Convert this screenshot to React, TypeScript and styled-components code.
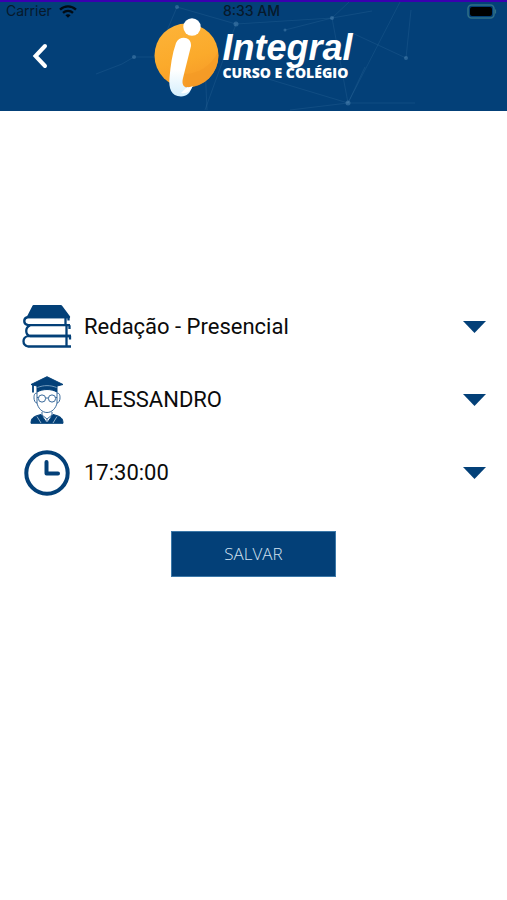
import React, { useState } from "react";
import styled, { createGlobalStyle } from "styled-components";

const navy = "#034078";

const GlobalStyle = createGlobalStyle`
  *, *::before, *::after { box-sizing: border-box; }
  body { margin: 0; background: #fff; font-family: Roboto, sans-serif; }
`;

const Screen = styled.div`
  min-height: 100vh;
  background: #fff;
`;

const Header = styled.header`
  position: relative;
  height: 111px;
  overflow: hidden;
  background: ${navy};
  border-top: 2px solid #3a00b0;
`;

const Network = styled.svg`
  position: absolute;
  top: 0;
  left: 50%;
  width: 508px;
  height: 109px;
  margin-left: -254px;
`;

const StatusBar = styled.div`
  position: relative;
  display: grid;
  grid-template-columns: 1fr auto 1fr;
  align-items: center;
  height: 18px;
  padding: 0 10px 0 6px;
  color: #07192b;
  font-family: Inter, sans-serif;
  font-size: 14px;
  line-height: 18px;
`;

const Carrier = styled.div`
  display: flex;
  align-items: center;
  gap: 7px;
`;

const Clock = styled.time`
  font-weight: 500;
`;

const Battery = styled.svg`
  justify-self: end;
`;

const TitleBar = styled.div`
  position: relative;
  display: grid;
  grid-template-columns: 1fr auto 1fr;
  align-items: start;
`;

const BackButton = styled.button`
  justify-self: start;
  display: flex;
  margin: 19px 0 0 24px;
  padding: 4px 8px;
  border: 0;
  background: none;
  cursor: pointer;
`;

const Brand = styled.div`
  display: flex;
  gap: 3px;
  margin-top: -2px;
`;

const BrandWords = styled.div`
  display: flex;
  flex-direction: column;
  padding-top: 12px;
  color: #fff;
  white-space: nowrap;
`;

const BrandName = styled.span`
  font: italic 700 36px/36px "Liberation Sans", sans-serif;
`;

const BrandTagline = styled.span`
  font: 800 14px/14px "Open Sans", sans-serif;
`;

const Form = styled.form`
  display: flex;
  flex-direction: column;
  padding-top: 179px;
`;

const Field = styled.label`
  display: grid;
  grid-template-columns: 50px 1fr;
  align-items: center;
  column-gap: 12px;
  height: 73px;
  padding: 0 21px 0 22px;
`;

const FieldIcon = styled.span`
  display: flex;
  justify-content: center;
`;

const SelectBox = styled.span`
  display: grid;
  align-items: center;

  > * { grid-area: 1 / 1; }
`;

const Select = styled.select`
  appearance: none;
  width: 100%;
  height: 44px;
  padding: 0 32px 0 0;
  border: 0;
  background: none;
  color: #0b0b0b;
  font: 400 22px/28px Roboto, sans-serif;
  cursor: pointer;
`;

const Arrow = styled.svg`
  justify-self: end;
  pointer-events: none;
`;

const SaveButton = styled.button`
  align-self: center;
  width: 165px;
  height: 46px;
  margin-top: 22px;
  border: 1px solid #3c78a8;
  background: ${navy};
  color: #d3e2f0;
  font: 300 17px/20px "Open Sans", sans-serif;
  cursor: pointer;
`;

const WifiIcon = () => (
  <svg width="18" height="13" viewBox="0 0 18 13" fill="none" stroke="#020b14" strokeWidth="2.3" aria-hidden="true">
    <path d="M1 4.6C5.5.3 12.5.3 17 4.6" />
    <path d="M4 7.9c2.9-2.8 7.1-2.8 10 0" />
    <path d="M9 12.7 6.4 10.2c1.5-1.4 3.7-1.4 5.2 0z" fill="#020b14" stroke="none" />
  </svg>
);

const LogoMark = () => (
  <svg width="65" height="80" viewBox="0 0 65 80" aria-hidden="true">
    <defs>
      <linearGradient id="sun" x1="0" y1="0" x2="0.3" y2="1">
        <stop offset="0" stopColor="#fdb43a" />
        <stop offset="0.65" stopColor="#fbaa2b" />
        <stop offset="1" stopColor="#f79c28" />
      </linearGradient>
      <linearGradient id="stem" x1="0" y1="0" x2="0" y2="1">
        <stop offset="0.55" stopColor="#fff" />
        <stop offset="1" stopColor="#d4eefc" />
      </linearGradient>
    </defs>
    <circle cx="32.5" cy="37.5" r="32" fill="url(#sun)" />
    <path d="M30 56C45 56 57 48 64 34c2 18-11 35-31 35.500z" fill="#f39a25" opacity=".6" />
    <path d="M22 25C25 17 38 18 37 28L29 60C27 68 31 71 38 69C36 75 33 78.500 27 78.500C17 78.500 14.500 70 15.500 60C16.500 48 18 36 22 25Z" fill="url(#stem)" />
    <path d="M27 75c6 1 9-2 12-7-2 1-4 1.500-6 1z" fill="#fff" />
    <circle cx="38" cy="9" r="8.7" fill="#fff" />
  </svg>
);

const BooksIcon = () => (
  <svg width="50" height="44" viewBox="0 0 50 44" fill="none" stroke={navy} strokeWidth="2.3" strokeLinejoin="round" aria-hidden="true">
    <path d="M11.500 1.200H39L47 12H6z" fill={navy} />
    <path d="M46.500 12H6c-5 1-5 7 0 8.200h42M43.500 13v7M46.500 12v3.500" />
    <path d="M8 20.500c-5 2-5 9 0 10.500h41M47.500 20.200v3.800M44.500 21v10" />
    <path d="M49 31H6c-6 1.500-6 9 0 10.500h43M44.500 32v9.500M48 31v3.500" />
  </svg>
);

const ProfessorIcon = () => (
  <svg width="34" height="48" viewBox="0 0 34 48" fill="none" stroke={navy} aria-hidden="true">
    <path d="M17 .7 33 8.500 27 10v6c-6-3.300-14-3.300-20 0v-6L1 8.500z" fill={navy} />
    <path d="M7.500 11.500c6-2.500 13-2.500 19 0" stroke="#8fb1cd" strokeWidth=".8" />
    <path d="M3 8.500v8" strokeWidth="1.8" />
    <g stroke="#37689a">
      <path d="M7 16v11c1 5 5 9.500 10 9.500S26 32 27 27V16" />
      <path d="M7 17c-3 0-3 3-3 5s1 5 3 5M27 17c3 0 3 3 3 5s-1 5-3 5" />
      <circle cx="12" cy="22.5" r="3.6" />
      <circle cx="22" cy="22.5" r="3.6" />
      <path d="M15.500 22h3M7 21.500h1.500M25.500 21.500H27M12 36v3l5 4 5-4v-3M17 43v4" />
    </g>
    <path d="M1 47.300c0-5 2-7 10-8.800l6 8.800zM33 47.300c0-5-2-7-10-8.800l-6 8.800z" fill={navy} />
    <path d="M7 40.500l4 6.500M27 40.500l-4 6.500" stroke="#b7cee0" strokeWidth=".8" />
  </svg>
);

const ClockIcon = () => (
  <svg width="46" height="46" viewBox="0 0 46 46" fill="none" stroke={navy} strokeWidth="4" aria-hidden="true">
    <circle cx="23" cy="23" r="20.7" />
    <path d="M22.500 12v11.500H34" strokeLinecap="round" strokeLinejoin="round" />
  </svg>
);

type PickerProps = { label: string; icon: React.ReactNode; options: string[] };

function Picker({ label, icon, options }: PickerProps) {
  const [value, setValue] = useState(options[0]);
  return (
    <Field>
      <FieldIcon>{icon}</FieldIcon>
      <SelectBox>
        <Select aria-label={label} value={value} onChange={(e) => setValue(e.target.value)}>
          {options.map((option) => (
            <option key={option}>{option}</option>
          ))}
        </Select>
        <Arrow width="23" height="12" viewBox="0 0 23 12" aria-hidden="true">
          <path d="M0 0h23L11.500 12z" fill={navy} />
        </Arrow>
      </SelectBox>
    </Field>
  );
}

export default function App() {
  return (
    <Screen>
      <GlobalStyle />
      <Header>
        <Network viewBox="0 0 508 109" fill="none" stroke="#6fa3cc" strokeOpacity=".13" aria-hidden="true">
          <path d="M96 72 122 62 134 55 158 55M177 5 236 22 332 16 349 0M177 5 160 45M236 22 205 108M332 16 372 9M332 16 348 101 400 0M285 28 332 16M348 101 255 73M348 101H415M350 30 406 56 411 8M348 101 365 65M205 62 207 108M348 101 290 108" />
          <g fill="#6fa3cc" fillOpacity=".35" stroke="none">
            <circle cx="134" cy="55" r="2" />
            <circle cx="177" cy="5" r="2" />
            <circle cx="236" cy="22" r="2.5" />
            <circle cx="285" cy="28" r="1.5" />
            <circle cx="332" cy="16" r="2" />
            <circle cx="348" cy="101" r="2.5" />
            <circle cx="406" cy="56" r="2" />
          </g>
        </Network>
        <StatusBar>
          <Carrier>
            Carrier
            <WifiIcon />
          </Carrier>
          <Clock>8:33 AM</Clock>
          <Battery width="30" height="15" viewBox="0 0 30 15" aria-hidden="true">
            <rect x="1" y="1" width="26" height="13" rx="3.5" fill="none" stroke="#2f6f86" strokeWidth="1.5" />
            <rect x="3" y="3" width="22" height="9" rx="2" fill="#000" />
            <path d="M28.500 5.500v4" stroke="#2f6f86" strokeWidth="1.2" />
          </Battery>
        </StatusBar>
        <TitleBar>
          <BackButton type="button" aria-label="Voltar">
            <svg width="16" height="26" viewBox="0 0 16 26" fill="none" stroke="#fff" strokeWidth="4" strokeLinecap="round" aria-hidden="true">
              <path d="M13 3 3.500 13 13 23" />
            </svg>
          </BackButton>
          <Brand>
            <LogoMark />
            <BrandWords>
              <BrandName>Integral</BrandName>
              <BrandTagline>CURSO E COLÉGIO</BrandTagline>
            </BrandWords>
          </Brand>
        </TitleBar>
      </Header>
      <Form onSubmit={(e) => e.preventDefault()}>
        <Picker label="Disciplina" icon={<BooksIcon />} options={["Redação - Presencial"]} />
        <Picker label="Professor" icon={<ProfessorIcon />} options={["ALESSANDRO"]} />
        <Picker label="Horário" icon={<ClockIcon />} options={["17:30:00"]} />
        <SaveButton type="submit">SALVAR</SaveButton>
      </Form>
    </Screen>
  );
}
